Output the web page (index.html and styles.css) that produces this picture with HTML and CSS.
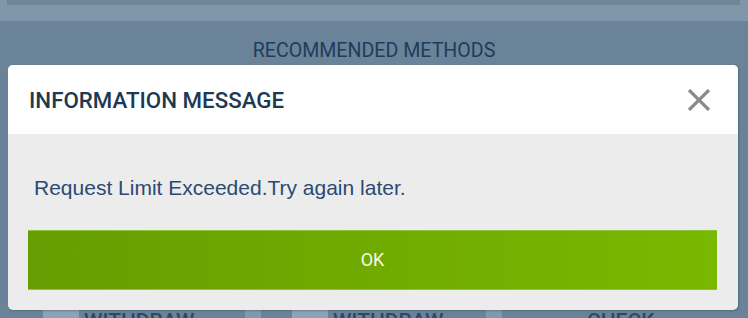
FILE: index.html
```html
<!DOCTYPE html>
<html>
<head>
<meta charset="utf-8">
<link rel="stylesheet" href="styles.css">
</head>
<body>
<div class="page">
  <div class="band"><div class="band-bar"></div></div>
  <h2 class="heading">RECOMMENDED METHODS</h2>
  <div class="tiles">
    <div class="tile tile-a"><span class="tile-icon"></span><span class="tile-text">WITHDRAW</span></div>
    <div class="sep"></div>
    <div class="tile tile-b"><span class="tile-icon"></span><span class="tile-text">WITHDRAW</span></div>
    <div class="sep"></div>
    <div class="tile tile-c"><span class="tile-text">CHECK</span></div>
  </div>

  <div class="dialog">
    <div class="dialog-head">
      <span class="dialog-title">INFORMATION MESSAGE</span>
      <svg class="close" width="24" height="22" viewBox="0 0 24 22" aria-label="Close">
        <path d="M2 1 L22 21 M22 1 L2 21" stroke="#8b8b8b" stroke-width="3.2" stroke-linecap="butt" fill="none"/>
      </svg>
    </div>
    <div class="dialog-body">
      <p class="message">Request Limit Exceeded.Try again later.</p>
      <button class="ok">OK</button>
    </div>
  </div>
</div>
</body>
</html>
```
FILE: styles.css
```css
html, body {
  margin: 0;
  padding: 0;
}
body {
  width: 748px;
  height: 318px;
  overflow: hidden;
  background: #6a8399;
  font-family: Roboto, "Liberation Sans", sans-serif;
}
.page {
  position: relative;
  width: 748px;
  height: 318px;
}
.band {
  height: 21px;
  background: #8097a9;
  border-bottom: 1px solid #6c8399;
  padding: 0 8px 0 7px;
}
.band-bar {
  height: 5px;
  background: #6f8599;
}
.heading {
  margin: 17px 0 0 0;
  font-size: 19.6px;
  line-height: 24px;
  font-weight: 400;
  color: #1f3d5a;
  text-align: center;
}
.tiles {
  margin-top: 245px;
  display: flex;
  padding: 0 20px;
  height: 40px;
}
.tile {
  flex: 0 0 225px;
  box-sizing: border-box;
  display: flex;
  justify-content: flex-start;
  align-items: flex-start;
  gap: 5px;
  padding-top: 2px;
}
.tile-a { padding-left: 23px; }
.tile-b { padding-left: 31px; }
.tile-c { padding-left: 85px; }
.tile-icon {
  width: 36px;
  height: 30px;
  background: #8da2b4;
}
.tile-text {
  font-size: 21px;
  font-weight: 500;
  line-height: 22px;
  color: #2e4862;
}
.sep {
  flex: 0 0 16px;
  margin-top: 2px;
  height: 30px;
  background: #8399ab;
}
.dialog {
  position: absolute;
  left: 8px;
  top: 65px;
  width: 730px;
  height: 245px;
  border-radius: 5px;
  overflow: hidden;
  background: #ececec;
  box-shadow: 1px 1px 2px rgba(40, 60, 80, 0.35);
}
.dialog-head {
  height: 69px;
  background: #ffffff;
  display: flex;
  align-items: center;
  justify-content: space-between;
  padding: 0 27px 0 21px;
}
.dialog-title {
  font-size: 22.3px;
  font-weight: 500;
  color: #1e3953;
  margin-top: 1px;
}
.close {
  display: block;
}
.dialog-body {
  padding: 0 21px 20px 20px;
}
.message {
  margin: 42px 0 0 0;
  padding-left: 6px;
  font-family: "Liberation Sans", Arial, sans-serif;
  font-size: 21px;
  line-height: 24px;
  color: #2b4a71;
}
.ok {
  display: block;
  width: 100%;
  height: 60px;
  margin-top: 30px;
  border: 0;
  border-top: 1px solid #8cc43a;
  border-bottom: 1px solid #8cc43a;
  background: linear-gradient(to right, #679d00, #79b800);
  color: #f4f8e6;
  font-family: Roboto, "Liberation Sans", sans-serif;
  font-size: 18px;
  line-height: 20px;
  padding: 0;
}
```
